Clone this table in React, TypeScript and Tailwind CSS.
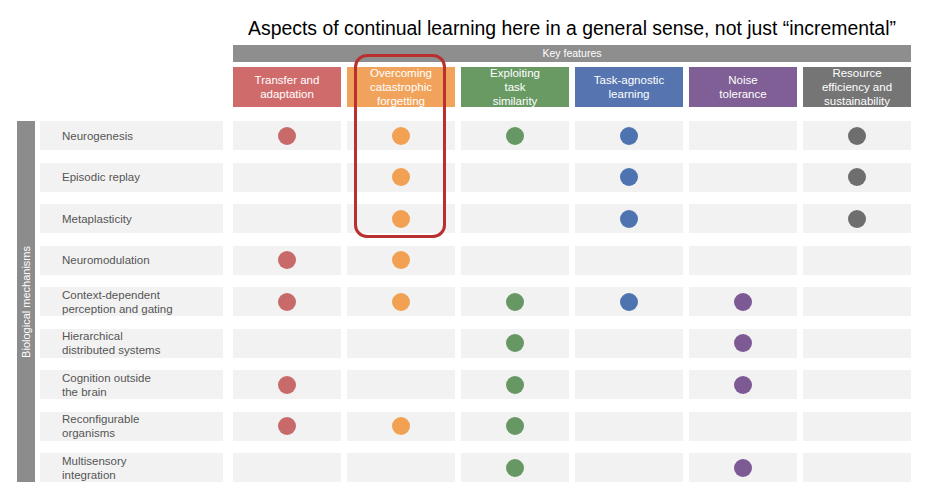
const features = [
  { label: ["Transfer  and", "adaptation"], bg: "bg-[#d06b6b]" },
  { label: ["Overcoming", "catastrophic", "forgetting"], bg: "bg-[#f2a35b]" },
  { label: ["Exploiting", "task", "similarity"], bg: "bg-[#699a64]" },
  { label: ["Task-agnostic", "learning"], bg: "bg-[#5675b0]" },
  { label: ["Noise", "tolerance"], bg: "bg-[#7f5f95]" },
  { label: ["Resource", "efficiency and", "sustainability"], bg: "bg-[#757575]" },
];

const dotColors = [
  "bg-[#c96a6a]",
  "bg-[#f2a052]",
  "bg-[#679763]",
  "bg-[#4e73b1]",
  "bg-[#7e5a94]",
  "bg-[#6e6e6e]",
];

// 1 = dot in that feature column
const mechanisms = [
  { label: ["Neurogenesis"], dots: [1, 1, 1, 1, 0, 1] },
  { label: ["Episodic replay"], dots: [0, 1, 0, 1, 0, 1] },
  { label: ["Metaplasticity"], dots: [0, 1, 0, 1, 0, 1] },
  { label: ["Neuromodulation"], dots: [1, 1, 0, 0, 0, 0] },
  { label: ["Context-dependent", "perception and gating"], dots: [1, 1, 1, 1, 1, 0] },
  { label: ["Hierarchical", "distributed systems"], dots: [0, 0, 1, 0, 1, 0] },
  { label: ["Cognition outside", "the brain"], dots: [1, 0, 1, 0, 1, 0] },
  { label: ["Reconfigurable", "organisms"], dots: [1, 1, 1, 0, 0, 0] },
  { label: ["Multisensory", "integration"], dots: [0, 0, 1, 0, 1, 0] },
];

export default function App() {
  return (
    <div className="relative w-[937px] h-[500px] bg-white overflow-hidden font-['Liberation_Sans',Arial,sans-serif]">
      {/* Title + header */}
      <div className="pl-[233px] w-[911px]">
        <h1 className="pt-[15px] h-[45px] text-center text-[19.4px] leading-[26px] text-black whitespace-nowrap">
          Aspects of continual learning here in a general sense, not just “incremental”
        </h1>
        <div className="h-[17px] bg-[#8e8e8e] text-white text-[10.5px] flex items-center justify-center">
          Key features
        </div>
        <div className="mt-[5px] grid grid-cols-6 gap-[6px]">
          {features.map((f, i) => (
            <div
              key={i}
              className={`${f.bg} h-[40px] flex flex-col items-center justify-center text-white text-[11.5px] leading-[14px] text-center whitespace-nowrap`}
            >
              {f.label.map((l, j) => (
                <span key={j}>{l}</span>
              ))}
            </div>
          ))}
        </div>
      </div>

      {/* Matrix */}
      <div className="mt-[14px] pl-[17px] flex">
        <div className="w-[18px] bg-[#8c8c8c] flex items-center justify-center">
          <span className="[writing-mode:vertical-rl] rotate-180 text-white text-[11px] whitespace-nowrap">
            Biological mechanisms
          </span>
        </div>
        <div className="ml-[5px] flex flex-col gap-[12.5px]">
          {mechanisms.map((m, i) => (
            <div key={i} className="flex h-[29px]">
              <div className="w-[183px] bg-[#f2f2f2] pl-[22px] flex flex-col justify-center text-[11.5px] leading-[14px] text-[#555]">
                {m.label.map((l, j) => (
                  <span key={j}>{l}</span>
                ))}
              </div>
              <div className="ml-[10px] grid grid-cols-[repeat(6,108px)] gap-[6px]">
                {m.dots.map((d, j) => (
                  <div key={j} className="bg-[#f2f2f2] flex items-center justify-center">
                    {d ? <div className={`w-[18px] h-[18px] rounded-full ${dotColors[j]}`} /> : null}
                  </div>
                ))}
              </div>
            </div>
          ))}
        </div>
      </div>

      {/* Highlight annotation */}
      <div className="absolute left-[354px] top-[54px] w-[92px] h-[184px] border-[3px] border-[#b9302f] rounded-[13px]" />
    </div>
  );
}
